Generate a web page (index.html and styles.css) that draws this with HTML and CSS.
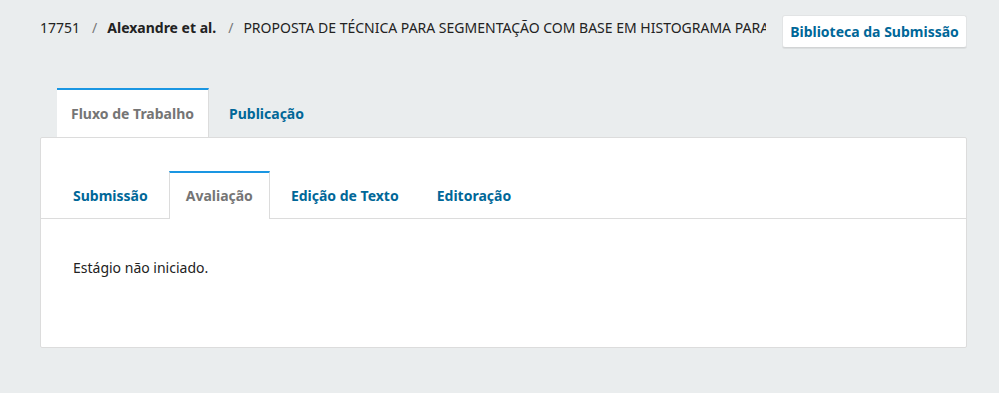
FILE: index.html
```html
<!DOCTYPE html>
<html lang="pt">
<head>
<meta charset="utf-8">
<link rel="stylesheet" href="styles.css">
</head>
<body>
<div class="page">
  <div class="header">
    <div class="crumbs">
      <span class="id">17751</span>
      <span class="sep">/</span>
      <span class="author">Alexandre et al.</span>
      <span class="sep">/</span>
      <span class="title">PROPOSTA DE TÉCNICA PARA SEGMENTAÇÃO COM BASE EM HISTOGRAMA PARA IMAGENS</span>
    </div>
    <button class="lib-btn">Biblioteca da Submissão</button>
  </div>
  <div class="outer-tabs">
    <div class="otab active">Fluxo de Trabalho</div>
    <div class="otab">Publicação</div>
  </div>
  <div class="panel">
    <div class="inner-tabs">
      <div class="itab">Submissão</div>
      <div class="itab active">Avaliação</div>
      <div class="itab">Edição de Texto</div>
      <div class="itab">Editoração</div>
    </div>
    <div class="content">Estágio não iniciado.</div>
  </div>
</div>
</body>
</html>
```
FILE: styles.css
```css
html, body {
  margin: 0;
  padding: 0;
  background: #eaedee;
  font-family: "Noto Sans", sans-serif;
  font-size: 14px;
  color: #222;
}
.page {
  padding: 15px 32px 0 40px;
}
.header {
  display: flex;
  align-items: center;
  justify-content: space-between;
  height: 33px;
}
.crumbs {
  display: flex;
  align-items: center;
  white-space: nowrap;
  overflow: hidden;
  width: 726px;
  margin-top: -8px;
}
.sep {
  color: #777;
  margin: 0 10px 0 12px;
}
.author {
  font-weight: bold;
}
.title {
  overflow: hidden;
  flex: 1;
  min-width: 0;
}
.lib-btn {
  font-family: "Noto Sans", sans-serif;
  font-size: 14px;
  font-weight: bold;
  color: #006798;
  background: #fff;
  border: 1px solid #e2e4e5;
  border-bottom-color: #d2d4d5;
  border-radius: 3px;
  box-shadow: 0 1px 0 #dcdfe0;
  height: 33px;
  width: 185px;
  padding: 0;
}
.outer-tabs {
  display: flex;
  gap: 6px;
  padding-left: 17px;
  margin-top: 40px;
}
.otab {
  height: 47px;
  line-height: 47px;
  padding: 0 14px;
  border-top: 2px solid transparent;
  font-weight: bold;
  color: #006798;
}
.otab.active {
  background: #fff;
  color: #757575;
  border-top-color: #1a96e2;
  border-right: 1px solid #dcdcdc;
  margin-bottom: -1px;
  position: relative;
}
.panel {
  background: #fff;
  border: 1px solid #dcdcdc;
  border-radius: 2px;
  height: 209px;
}
.inner-tabs {
  display: flex;
  gap: 4px;
  padding: 33px 0 0 16px;
  border-bottom: 1px solid #dcdcdc;
}
.itab {
  height: 45px;
  line-height: 45px;
  padding: 0 16px;
  border: 1px solid transparent;
  border-top: 2px solid transparent;
  border-bottom: none;
  font-weight: bold;
  color: #006798;
  margin-bottom: -1px;
}
.itab:first-child {
  padding-left: 15px;
}
.itab.active {
  background: #fff;
  color: #757575;
  border-color: #dcdcdc;
  border-top-color: #1a96e2;
  height: 46px;
}
.content {
  padding: 39px 32px 0 32px;
}
```
